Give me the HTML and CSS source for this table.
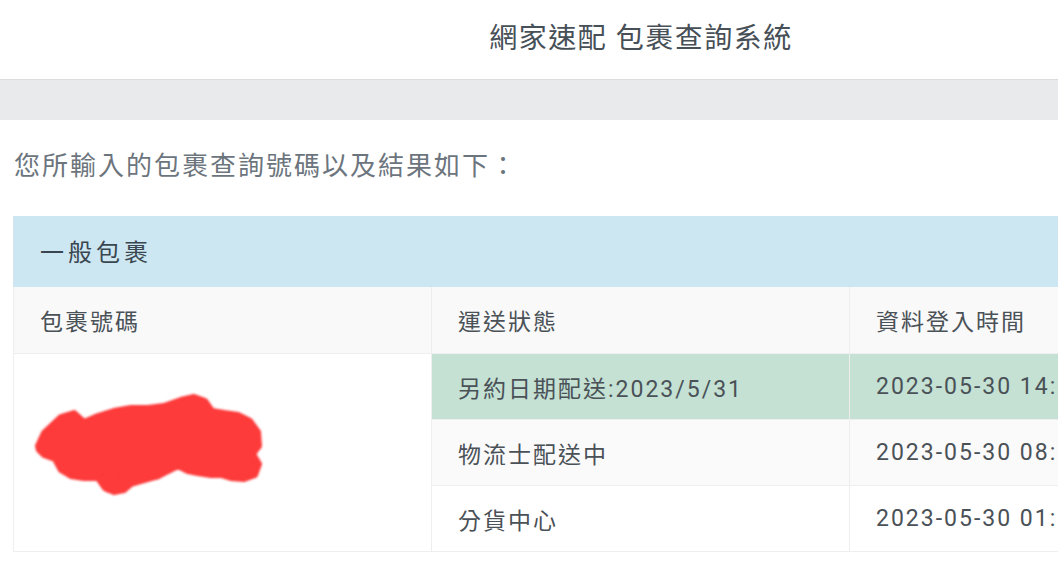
FILE: index.html
```html
<!DOCTYPE html>
<html lang="zh-Hant">
<head>
<meta charset="utf-8">
<title>網家速配 包裹查詢系統</title>
<link rel="stylesheet" href="styles.css">
</head>
<body>
<header class="topbar">
  <h1 class="title">網家速配 包裹查詢系統</h1>
</header>
<div class="band"></div>
<main class="content">
  <p class="intro">您所輸入的包裹查詢號碼以及結果如下：</p>
  <table class="result">
    <thead>
      <tr><th class="group" colspan="3">一般包裹</th></tr>
      <tr class="colhead">
        <th>包裹號碼</th>
        <th>運送狀態</th>
        <th>資料登入時間</th>
      </tr>
    </thead>
    <tbody>
      <tr class="active">
        <td class="code" rowspan="3">
          <svg class="redact" width="232" height="108" viewBox="0 0 232 108" aria-hidden="true">
            <defs>
              <filter id="soft" filterUnits="userSpaceOnUse" x="0" y="0" width="232" height="108">
                <feGaussianBlur stdDeviation="1.3"/>
              </filter>
            </defs>
            <g filter="url(#soft)" fill="#fd3a3a">
              <path stroke="#fd3a3a" stroke-width="6" stroke-linejoin="round"
                d="M5 54 L11 41 L28 25 L41 21 L51 30 L65 24 L81 19 L98 16 L115 16 L131 14 L148 8 L161 5 L172 9 L179 19 L191 21 L205 23 L217 29 L225 40 L226 54 L220 62 L226 72 L222 83 L211 87 L198 86 L188 83 L178 83 L165 81 L155 79 L145 74 L135 79 L125 84 L111 88 L98 92 L91 98 L81 100 L72 96 L65 86 L51 86 L38 84 L28 78 L22 67 L11 63 L6 58 Z"/>
              <circle cx="78" cy="90" r="11"/>
              <circle cx="122" cy="78" r="10"/>
              <circle cx="214" cy="78" r="10"/>
              <circle cx="34" cy="30" r="9"/>
            </g>
          </svg>
        </td>
        <td>另約日期配送:2023/5/31</td>
        <td>2023-05-30 14:32</td>
      </tr>
      <tr class="alt">
        <td>物流士配送中</td>
        <td>2023-05-30 08:15</td>
      </tr>
      <tr>
        <td>分貨中心</td>
        <td>2023-05-30 01:20</td>
      </tr>
    </tbody>
  </table>
</main>
</body>
</html>
```

FILE: styles.css
```css
html, body {
  margin: 0;
  padding: 0;
  background: #ffffff;
  overflow: hidden;
}

body {
  font-family: Roboto, "Noto Sans CJK TC", "Noto Sans", sans-serif;
  color: #495057;
  width: 1058px;
}

.topbar {
  height: 80px;
  display: flex;
  align-items: center;
  justify-content: center;
  border-bottom: 1px solid #dcdddf;
  padding: 0 0 8px 224px;
  box-sizing: border-box;
}

.title {
  margin: 0;
  font-size: 28px;
  font-weight: 400;
  letter-spacing: 1.5px;
  color: #474f57;
  white-space: nowrap;
}

.band {
  height: 40px;
  background: #e9eaec;
}

.content {
  padding: 0 0 0 13px;
}

.intro {
  margin: 0;
  padding: 27px 0 0 1px;
  height: 96px;
  box-sizing: border-box;
  font-size: 26px;
  line-height: 38px;
  letter-spacing: 2px;
  color: #6c757d;
  white-space: nowrap;
}

.result {
  border-collapse: collapse;
  table-layout: fixed;
  width: 1255px;
  border: 1px solid #eeeeee;
}

.result th,
.result td {
  width: 418px;
  text-align: left;
  font-weight: 400;
  font-size: 23px;
  letter-spacing: 2px;
  padding: 0 26px;
  border: 1px solid #eeeeee;
  white-space: nowrap;
  overflow: hidden;
  color: #4a5157;
}

.result th.group {
  height: 70px;
  padding-bottom: 3px;
  box-sizing: border-box;
  background: #cde7f2;
  font-size: 24px;
  letter-spacing: 4px;
  color: #3a464f;
  border-color: #cde7f2;
}

.colhead th {
  height: 65px;
  padding-bottom: 1px;
  background: #f9f9f9;
}

.result td {
  height: 65px;
}

.result td.code {
  background: #ffffff;
  padding: 0 0 0 19px;
  vertical-align: middle;
}

.redact {
  display: block;
  margin-top: -14px;
}

.active td:not(.code) {
  background: #c4e1d4;
}

.alt td {
  background: #fafafa;
}
```
